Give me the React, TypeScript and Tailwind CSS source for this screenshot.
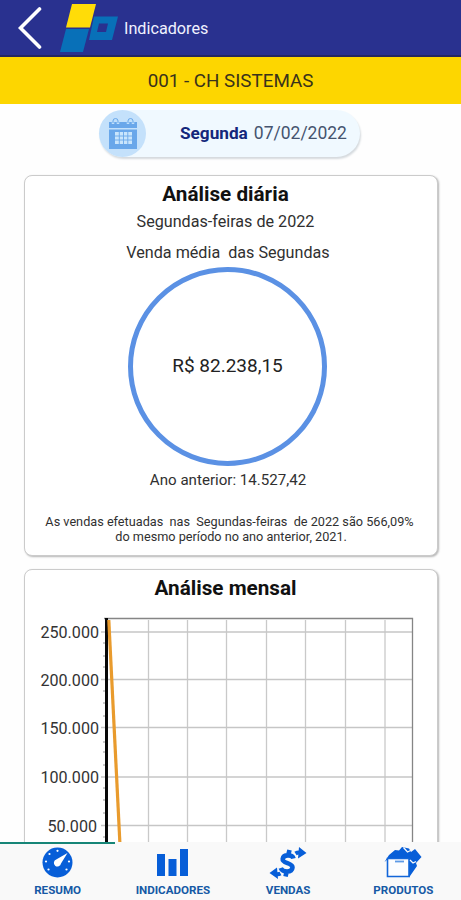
import type { ReactNode } from "react";

const yTicks = [
  { label: "250.000", x: 99, y: 63 },
  { label: "200.000", x: 99, y: 110.5 },
  { label: "150.000", x: 99, y: 158.5 },
  { label: "100.000", x: 99, y: 208 },
  { label: "50.000", x: 97, y: 256.5 },
];

const columns = [124.5, 163.5, 202.5, 242.5, 281.5, 321.5, 361];

const minorTicks = [74, 87, 98, 122, 134, 147, 173, 183, 196, 219, 231, 244, 268];

function Card({ children, className }: { children: ReactNode; className: string }) {
  return (
    <section
      className={`mx-[24px] w-[414px] shrink-0 rounded-[8px] border border-[#cbcbcb] bg-white shadow-[1px_1px_2px_#b5b5b5] ${className}`}
    >
      {children}
    </section>
  );
}

function Logo() {
  return (
    <svg className="ml-[18px] h-[52px] w-[60px]" viewBox="0 0 60 52">
      <path d="M12 2h24l-6 23.500H6z" fill="#ffdc08" />
      <path d="M6 27h23l-6 23H0z" fill="#0870b8" />
      <path d="M34 14.500h24L52 38H29zM39 21.500L37 30h9l2-8.500z" fill="#0870b8" fillRule="evenodd" />
    </svg>
  );
}

function CalendarIcon() {
  return (
    <svg className="h-[32px] w-[30px]" viewBox="0 0 30 32" fill="none">
      <path d="M1 4h28v6H1zM1 11.500h28V31H1z" fill="#69a7ea" />
      <path d="M5 6V3a3 3 0 0 1 5 0v3M20 6V3a3 3 0 0 1 5 0v3" stroke="#bfdffa" strokeWidth="2.5" />
      <path d="M5 5V3a2.500 2.500 0 0 1 5 0v2M20 5V3a2.500 2.500 0 0 1 5 0v2" stroke="#69a7ea" />
      <path d="M7 14h17v12H7z" fill="#c9e5fc" />
      <path d="M7 18h17M7 22h17M11.300 14v12M15.500 14v12M19.800 14v12" stroke="#69a7ea" strokeWidth="0.900" />
    </svg>
  );
}

function MonthlyChart() {
  return (
    <svg
      className="block h-[273px] w-[412px]"
      viewBox="0 0 412 273"
      fontFamily="Roboto, sans-serif"
      fontSize="16.100"
    >
      <g transform="translate(-25 -1)">
        {columns.map((x) => (
          <path key={x} d={`M${x + 24} 51V274`} stroke="#c9c9c9" strokeWidth="1.3" />
        ))}
        {yTicks.map(({ label, x, y }) => (
          <g key={label}>
            <path d={`M101 ${y}H412`} stroke="#c6c6c6" strokeWidth="1.3" />
            <text x={x} y={y + 6} textAnchor="end" fill="#333">
              {label}
            </text>
          </g>
        ))}
        {minorTicks.map((y) => (
          <path key={y} d={`M103 ${y}h3`} stroke="#999" />
        ))}
        <path d="M104 49.500H412.500V274" fill="none" stroke="#858585" strokeWidth="1.3" />
        <path d="M106.500 49V274" stroke="#080808" strokeWidth="3" />
        <path d="M108.800 51L120 276" stroke="#e99b2d" strokeWidth="3.2" />
      </g>
    </svg>
  );
}

function GaugeIcon() {
  return (
    <svg className="size-[31px]" viewBox="0 0 31 31">
      <circle cx="15.500" cy="15.500" r="15" fill="#075ed8" />
      <g fill="#fff">
        <circle cx="15.500" cy="3.800" r="1.100" />
        <circle cx="7.500" cy="7" r="1.100" />
        <circle cx="4" cy="14.500" r="1.100" />
        <circle cx="6.500" cy="22.500" r="1.100" />
        <circle cx="27" cy="14.500" r="1.100" />
        <circle cx="24.500" cy="22.500" r="1.100" />
        <path d="M25.500 6L19 16.500a3.600 3.600 0 1 1-4.800-4z" />
      </g>
    </svg>
  );
}

function BarsIcon() {
  return (
    <svg className="h-[29px] w-[31px]" viewBox="0 0 31 29" fill="#075ed8">
      <path d="M0 6h8v22H0zM11.500 11h8v17h-8zM23 1h8v27h-8z" />
    </svg>
  );
}

function SalesIcon() {
  return (
    <svg className="h-[32px] w-[38px]" viewBox="0 0 38 32" fill="none" stroke="#075ed8">
      <path
        d="M24.500 11.500c-1-4-10-4.500-10.800.3-.7 4.800 10.300 3.700 9.800 8.700-.5 5.500-10 5-11.800.5M20.500 3l-1 4M17.500 25.500l-1 4"
        strokeWidth="4.600"
      />
      <path d="M26.500 6.500c1.500-1 3-1.200 4.500-1M11.500 26.500c-1.500.8-3 .8-4.500.5" strokeWidth="4" />
      <path d="M30 0l7.500 6-8.500 5.500zM8 20.500L.5 26l8.500 6z" fill="#075ed8" stroke="none" />
    </svg>
  );
}

function BoxIcon() {
  return (
    <svg className="h-[33px] w-[38px]" viewBox="0 0 38 33">
      <path d="M.5 16L5 9l6-5 4 .5L18 1l7 1.500 2 3.500 4-3 6.500 8-5.500 6 1 3-8 11.500V13H4z" fill="#075ed8" />
      <path d="M3.500 12.500h21.500v18H3.500z" fill="#fcfdff" stroke="#1266d9" strokeWidth="1.600" />
      <path d="M19.500 1.500l4 4.500 3-1.500M26 14l3 3 3-1.500" fill="none" stroke="#f9f9f9" strokeWidth="1.300" />
      <path d="M11 15.500h9" stroke="#5d9ae6" strokeWidth="1.800" />
    </svg>
  );
}

const tabs = [
  { label: "RESUMO", icon: <GaugeIcon /> },
  { label: "INDICADORES", icon: <BarsIcon /> },
  { label: "VENDAS", icon: <SalesIcon /> },
  { label: "PRODUTOS", icon: <BoxIcon /> },
];

export default function App() {
  return (
    <div className="flex h-[900px] w-[461px] flex-col overflow-hidden bg-[#fefefe] font-[Roboto,sans-serif] text-[#303030]">
      <header className="flex h-[57px] shrink-0 items-center border-b-2 border-[#252760] bg-[#29318f]">
        <svg className="ml-[18px] h-[44px] w-[24px]" viewBox="0 0 24 44" fill="none">
          <path d="M21.500 3L2.500 22l19 19" stroke="#fff" strokeWidth="3.600" strokeLinecap="round" />
        </svg>
        <Logo />
        <h1 className="ml-[4px] pt-[2px] text-[16.200px] leading-[20px] text-[#f0f1ff]">Indicadores</h1>
      </header>
      <div className="flex h-[47px] shrink-0 items-center justify-center bg-[#fdd600] pt-[2px] text-[18.800px] text-[#39321b]">
        001 - CH SISTEMAS
      </div>

      <main className="flex min-h-0 flex-1 flex-col overflow-hidden pt-[6px]">
        <button className="ml-[99px] flex h-[47px] w-[261px] shrink-0 items-center rounded-full bg-[#f0f9ff] shadow-[1px_2px_2px_#d5dade]">
          <span className="flex size-[47px] items-center justify-center rounded-full bg-[#c4e1fb]">
            <CalendarIcon />
          </span>
          <span className="ml-[34px] whitespace-nowrap text-[17.500px] text-[#45546f]">
            <b className="text-[17.200px] text-[#14277b]">Segunda</b>
            <span className="ml-[6px]">07/02/2022</span>
          </span>
        </button>

        <Card className="mt-[18px] flex h-[381px] flex-col items-center whitespace-pre">
          <h2 className="mt-[4px] mr-[11px] text-[20.700px] leading-[28px] font-bold text-[#111]">Análise diária</h2>
          <p className="mt-px mr-[11px] text-[16.150px] leading-[26px]">Segundas-feiras de 2022</p>
          <p className="mt-[5px] mr-[6px] text-[16.150px] leading-[26px]">{"Venda média  das Segundas"}</p>
          <div className="mt-px mr-[7px] flex size-[199px] shrink-0 items-center justify-center rounded-full border-[5px] border-[#5b91e4] text-[19px] text-[#222]">
            R$ 82.238,15
          </div>
          <p className="mt-px mr-[6px] text-[15.100px] leading-[26px]">
            Ano anterior: 14.527,42
          </p>
          <p className="mt-[21px] mr-[3px] text-center text-[12.700px] leading-[15px]">
            {"As vendas efetuadas  nas  Segundas-feiras  de 2022 são 566,09%\n do mesmo período no ano anterior, 2021."}
          </p>
        </Card>

        <Card className="relative mt-[13px] h-[400px]">
          <h2 className="absolute top-[4px] left-0 w-[401px] text-center text-[20.700px] leading-[28px] font-bold text-[#111]">
            Análise mensal
          </h2>
          <MonthlyChart />
        </Card>
      </main>

      <nav className="grid h-[58px] shrink-0 grid-cols-4 bg-[#f9f9f9]">
        {tabs.map(({ label, icon }, i) => (
          <button
            key={label}
            className={`flex flex-col items-center border-t-2 ${i === 0 ? "border-[#168577]" : "border-transparent"}`}
          >
            <span className="mt-[2px] flex h-[33px] items-center">{icon}</span>
            <span className="mt-[4px] text-[11.600px] leading-[14px] font-bold text-[#1659a5]">{label}</span>
          </button>
        ))}
      </nav>
    </div>
  );
}
